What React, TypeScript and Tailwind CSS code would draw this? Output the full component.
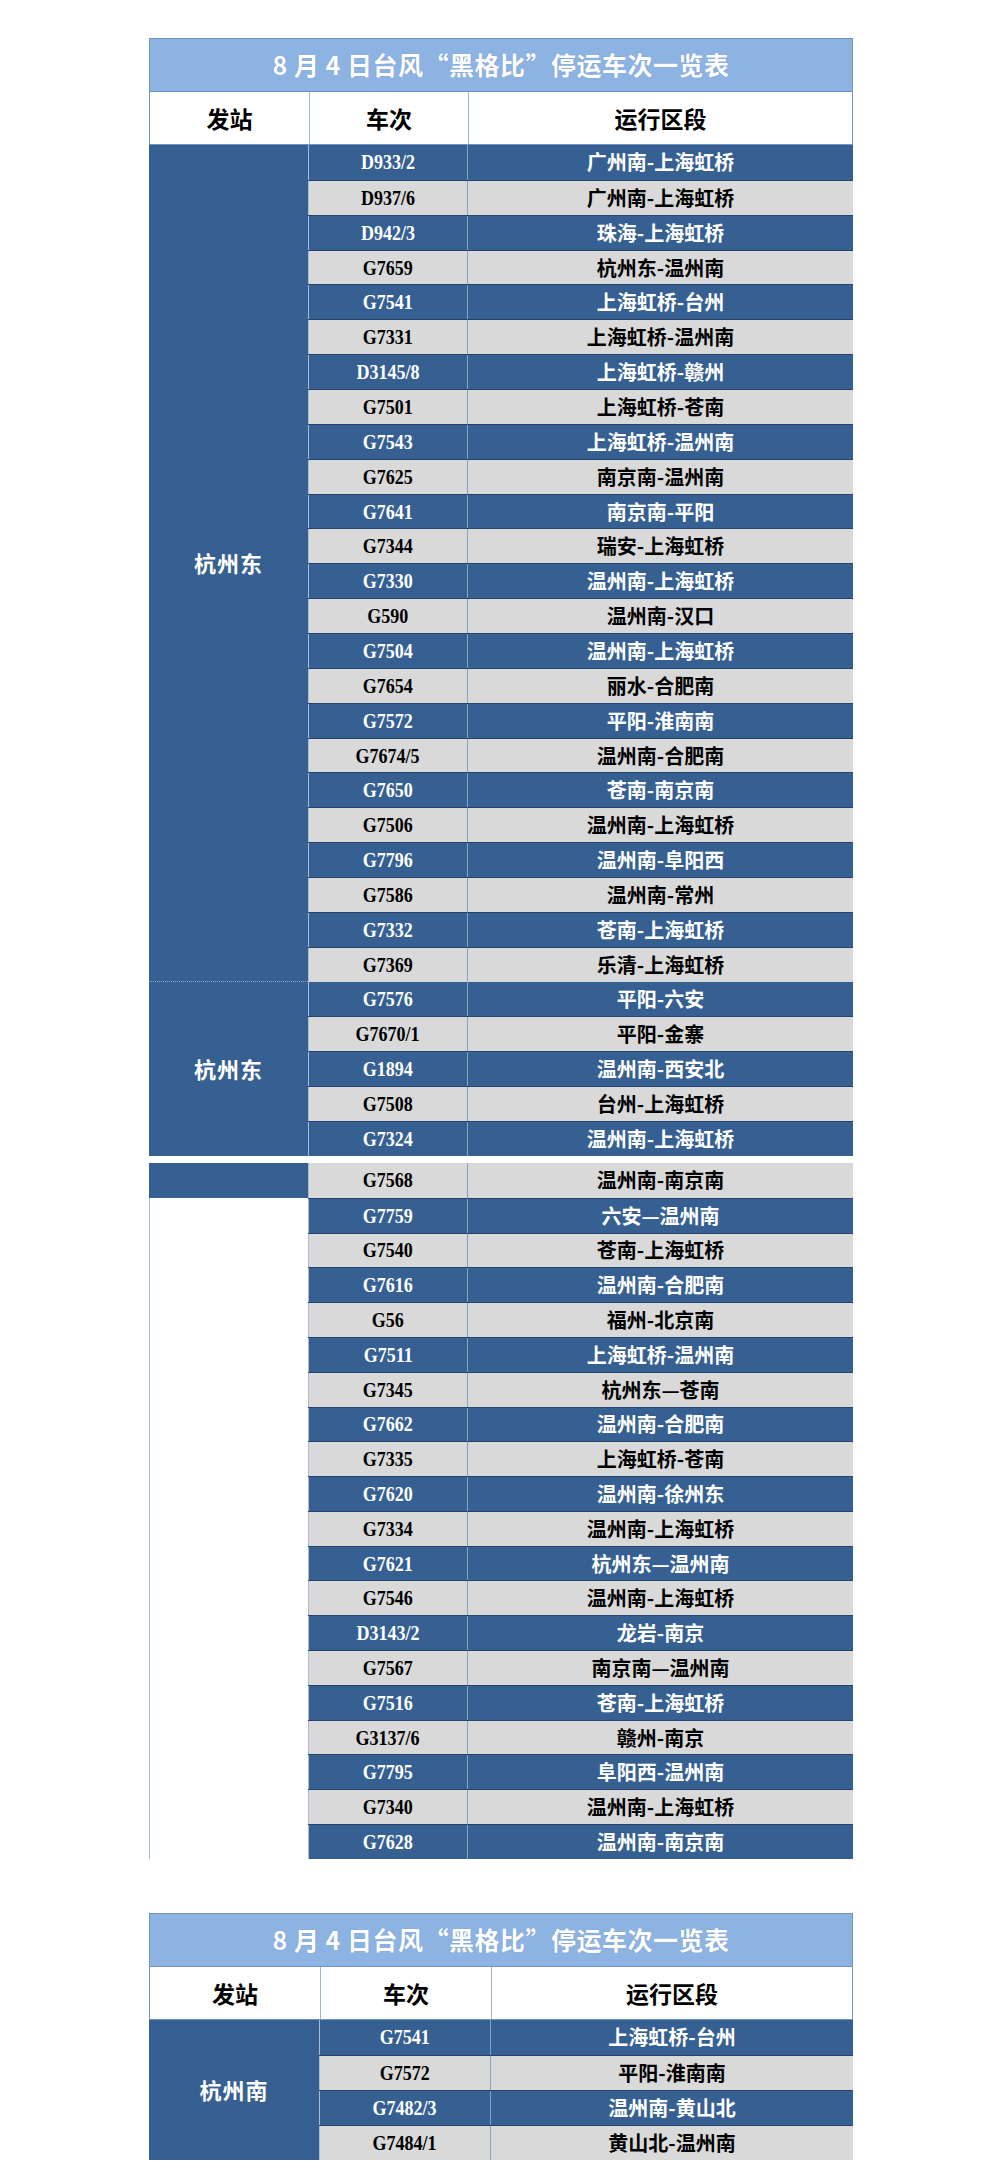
import React from "react";

type Train = { no: string; route: string };

const TITLE = "8 月 4 日台风“黑格比”停运车次一览表";

const GROUP_A: Train[] = [
  { no: "D933/2", route: "广州南-上海虹桥" },
  { no: "D937/6", route: "广州南-上海虹桥" },
  { no: "D942/3", route: "珠海-上海虹桥" },
  { no: "G7659", route: "杭州东-温州南" },
  { no: "G7541", route: "上海虹桥-台州" },
  { no: "G7331", route: "上海虹桥-温州南" },
  { no: "D3145/8", route: "上海虹桥-赣州" },
  { no: "G7501", route: "上海虹桥-苍南" },
  { no: "G7543", route: "上海虹桥-温州南" },
  { no: "G7625", route: "南京南-温州南" },
  { no: "G7641", route: "南京南-平阳" },
  { no: "G7344", route: "瑞安-上海虹桥" },
  { no: "G7330", route: "温州南-上海虹桥" },
  { no: "G590", route: "温州南-汉口" },
  { no: "G7504", route: "温州南-上海虹桥" },
  { no: "G7654", route: "丽水-合肥南" },
  { no: "G7572", route: "平阳-淮南南" },
  { no: "G7674/5", route: "温州南-合肥南" },
  { no: "G7650", route: "苍南-南京南" },
  { no: "G7506", route: "温州南-上海虹桥" },
  { no: "G7796", route: "温州南-阜阳西" },
  { no: "G7586", route: "温州南-常州" },
  { no: "G7332", route: "苍南-上海虹桥" },
  { no: "G7369", route: "乐清-上海虹桥" },
];

const GROUP_B: Train[] = [
  { no: "G7576", route: "平阳-六安" },
  { no: "G7670/1", route: "平阳-金寨" },
  { no: "G1894", route: "温州南-西安北" },
  { no: "G7508", route: "台州-上海虹桥" },
  { no: "G7324", route: "温州南-上海虹桥" },
];

const GROUP_C: Train[] = [
  { no: "G7568", route: "温州南-南京南" },
  { no: "G7759", route: "六安—温州南" },
  { no: "G7540", route: "苍南-上海虹桥" },
  { no: "G7616", route: "温州南-合肥南" },
  { no: "G56", route: "福州-北京南" },
  { no: "G7511", route: "上海虹桥-温州南" },
  { no: "G7345", route: "杭州东—苍南" },
  { no: "G7662", route: "温州南-合肥南" },
  { no: "G7335", route: "上海虹桥-苍南" },
  { no: "G7620", route: "温州南-徐州东" },
  { no: "G7334", route: "温州南-上海虹桥" },
  { no: "G7621", route: "杭州东—温州南" },
  { no: "G7546", route: "温州南-上海虹桥" },
  { no: "D3143/2", route: "龙岩-南京" },
  { no: "G7567", route: "南京南—温州南" },
  { no: "G7516", route: "苍南-上海虹桥" },
  { no: "G3137/6", route: "赣州-南京" },
  { no: "G7795", route: "阜阳西-温州南" },
  { no: "G7340", route: "温州南-上海虹桥" },
  { no: "G7628", route: "温州南-南京南" },
];

const GROUP_D: Train[] = [
  { no: "G7541", route: "上海虹桥-台州" },
  { no: "G7572", route: "平阳-淮南南" },
  { no: "G7482/3", route: "温州南-黄山北" },
  { no: "G7484/1", route: "黄山北-温州南" },
];

const CJK = "font-['Noto_Sans_CJK_SC',sans-serif]";

function TitleBar() {
  return (
    <div className="flex h-[54px] items-center justify-center border border-[#6f93c2] bg-[#8db3e2]">
      <span
        className={`${CJK} text-[25px] font-bold tracking-[0.5px] text-white [text-shadow:0_0_1px_#6d8fbd]`}
      >
        {TITLE}
      </span>
    </div>
  );
}

function HeaderRow({ c1, c2 }: { c1: string; c2: string }) {
  return (
    <div
      className={`${CJK} flex h-[53px] border-x border-b border-[#6f93c2] bg-white text-[23px] font-bold text-black`}
    >
      <div className={`${c1} flex items-center justify-center`}>发站</div>
      <div
        className={`${c2} flex items-center justify-center border-l border-[#9fb5d0]`}
      >
        车次
      </div>
      <div className="flex flex-1 items-center justify-center border-l border-[#9fb5d0]">
        运行区段
      </div>
    </div>
  );
}

function TrainRow({
  t,
  dark,
  c2,
  h,
}: {
  t: Train;
  dark: boolean;
  c2: string;
  h: string;
}) {
  const bg = dark ? "bg-[#366092] text-white" : "bg-[#d9d9d9] text-black";
  return (
    <div
      className={`flex ${h} border-t border-[#24446e] first:border-t-0 ${bg}`}
    >
      <div
        className={`${c2} flex items-center justify-center border-l border-[#a9bdd6]`}
      >
        <span className="inline-block scale-x-90 font-['Liberation_Serif',serif] text-[20px] font-bold">
          {t.no}
        </span>
      </div>
      <div className="flex flex-1 items-center justify-center border-l border-[#8aa2c2]">
        <span className={`${CJK} text-[20px] font-bold`}>{t.route}</span>
      </div>
    </div>
  );
}

function Group({
  station,
  rows,
  c1,
  c2,
  h,
  divider,
}: {
  station: string;
  rows: Train[];
  c1: string;
  c2: string;
  h: string;
  divider?: boolean;
}) {
  return (
    <div className="flex">
      <div
        className={`${c1} flex items-center justify-center bg-[#366092] ${
          divider ? "border-b border-dotted border-[#8fa9ca]" : ""
        }`}
      >
        <span className={`${CJK} text-[22px] font-bold tracking-[1px] text-white`}>
          {station}
        </span>
      </div>
      <div className="flex flex-1 flex-col">
        {rows.map((t, i) => (
          <TrainRow key={t.no + i} t={t} dark={i % 2 === 0} c2={c2} h={h} />
        ))}
      </div>
    </div>
  );
}

export default function App() {
  return (
    <div className="min-h-[2176px] bg-white pt-[38px]">
      <div className="ml-[149px] w-[704px]">
        <TitleBar />
        <HeaderRow c1="w-[159px]" c2="w-[159px]" />
        <Group
          station="杭州东"
          rows={GROUP_A}
          c1="w-[159px]"
          c2="w-[159px]"
          h="h-[34.86px]"
          divider
        />
        <Group
          station="杭州东"
          rows={GROUP_B}
          c1="w-[159px]"
          c2="w-[159px]"
          h="h-[34.86px]"
        />

        <div className="h-[7px]" />

        <div className="flex">
          <div className="flex w-[159px] flex-col">
            <div className="h-[34.8px] bg-[#366092]" />
            <div className="flex-1 border-l border-[#9fbbd8] bg-white" />
          </div>
          <div className="flex flex-1 flex-col">
            {GROUP_C.map((t, i) => (
              <TrainRow
                key={t.no + i}
                t={t}
                dark={i % 2 === 1}
                c2="w-[159px]"
                h="h-[34.8px]"
              />
            ))}
          </div>
        </div>
      </div>

      <div className="ml-[149px] mt-[54px] w-[704px]">
        <TitleBar />
        <HeaderRow c1="w-[170px]" c2="w-[171px]" />
        <Group
          station="杭州南"
          rows={GROUP_D}
          c1="w-[170px]"
          c2="w-[171px]"
          h="h-[35px]"
        />
      </div>
    </div>
  );
}
